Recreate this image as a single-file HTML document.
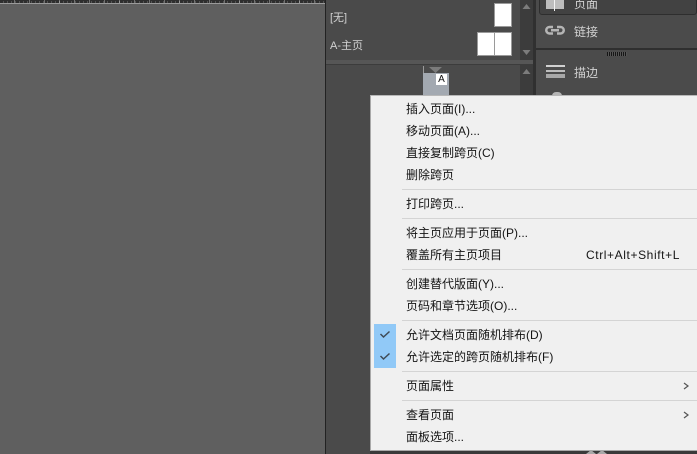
<!DOCTYPE html>
<html lang="zh"><head><meta charset="utf-8"><style>
html,body{margin:0;padding:0;width:697px;height:454px;overflow:hidden;background:#4a4a4a}
*{box-sizing:border-box}
body{position:relative;font-family:"Liberation Sans","Noto Sans CJK SC",sans-serif}
.a{position:absolute}
.t{position:absolute;white-space:nowrap;line-height:16px;height:16px;font-size:12px}
.m{color:#141414;left:406px}
.p{color:#d2d2d2}
.s{position:absolute;left:402px;width:295px;height:1px;background:#d4d4d4}
</style></head><body>
<!-- canvas -->
<div class="a" style="left:0;top:0;width:325px;height:454px;background:#5f5f5f"></div>
<div class="a" style="left:0;top:0;width:325px;height:3px;background:#2e2e2e"></div>
<div class="a" style="left:0;top:1px;width:325px;height:2px;background:repeating-linear-gradient(90deg,#2e2e2e 0 3px,#8c8c8c 3px 4px)"></div>
<div class="a" style="left:0;top:0;width:325px;height:3px;background:repeating-linear-gradient(90deg,#2e2e2e 0 14px,#a0a0a0 14px 15px);opacity:.6"></div>
<div class="a" style="left:0;top:3px;width:325px;height:1px;background:#9a9a9a"></div>
<div class="a" style="left:325px;top:0;width:1px;height:454px;background:#222"></div>
<!-- pages panel -->
<div class="a" style="left:326px;top:0;width:195px;height:454px;background:#4a4a4a"></div>
<div class="t p" style="left:330px;top:10px;font-size:11px">[无]</div>
<div class="t p" style="left:330px;top:38px;font-size:11px">A-主页</div>
<div class="a" style="left:494px;top:3px;width:18px;height:24px;background:#fff;border:1px solid #9a9a9a"></div>
<div class="a" style="left:477px;top:32px;width:18px;height:24px;background:#fff;border:1px solid #9a9a9a"></div>
<div class="a" style="left:494px;top:32px;width:18px;height:24px;background:#fff;border:1px solid #9a9a9a"></div>
<div class="a" style="left:326px;top:60px;width:207px;height:5px;background:#565656;border-bottom:1px solid #3c3c3c"></div>
<div class="a" style="left:520px;top:0;width:13px;height:60px;background:#3c3c3c"></div>
<div class="a" style="left:520px;top:65px;width:13px;height:389px;background:#3c3c3c"></div>
<div class="a" style="left:533px;top:0;width:3px;height:454px;background:#303030"></div>
<svg class="a" style="left:520px;top:0" width="13" height="80"><path d="M2.500 9l4-5 4 5zM2.500 50h8l-4 5zM2.500 74l4-5 4 5z" fill="#7c7c7c"/></svg>
<!-- thumb -->
<div class="a" style="left:423px;top:66px;width:1px;height:8px;background:#9a9a9a"></div>
<svg class="a" style="left:428px;top:66px" width="16" height="7"><path d="M1 1h13l-6.500 6z" fill="#7b7b7b"/></svg>
<div class="a" style="left:423px;top:73px;width:26px;height:24px;background:#a3a9b1"></div>
<div class="a" style="left:436px;top:74px;width:11px;height:11px;background:#fff;color:#111;font-size:10px;line-height:11px;text-align:center;font-weight:400">A</div>
<!-- right panel -->
<div class="a" style="left:536px;top:0;width:161px;height:454px;background:#4b4b4b"></div>
<div class="a" style="left:539px;top:-4px;width:158px;height:19px;background:#424242;border:1px solid #2e2e2e;border-radius:3px"></div>
<svg class="a" style="left:545px;top:0" width="20" height="12"><path d="M1 0h18v9H1z" fill="#bdbdbd"/><path d="M9.500 0v11" stroke="#f2f2f2" stroke-width="1"/></svg>
<div class="t p" style="left:574px;top:-4px">页面</div>
<svg class="a" style="left:545px;top:24px" width="20" height="14" fill="none" stroke="#b5b5b5" stroke-width="2.500"><path d="M8 3H4.500a3 3 0 0 0 0 6.500H8M12 3h3.500a3 3 0 0 1 0 6.500H12M6 6.200h8"/></svg>
<div class="t p" style="left:574px;top:24px">链接</div>
<div class="a" style="left:536px;top:48px;width:161px;height:2px;background:#2f2f2f"></div>
<div class="a" style="left:607px;top:52px;width:20px;height:4px;background:repeating-linear-gradient(90deg,#161616 0 1px,#555 1px 2px)"></div>
<div class="a" style="left:546px;top:65px;width:19px;height:2px;background:#d0d0d0"></div>
<div class="a" style="left:546px;top:70px;width:19px;height:2px;background:#bdbdbd"></div>
<div class="a" style="left:546px;top:74px;width:19px;height:4px;background:#a8a8a8"></div>
<div class="t p" style="left:574px;top:65px">描边</div>
<div class="a" style="left:552px;top:92px;width:10px;height:4px;background:#b5b5b5;border-radius:5px 5px 0 0"></div>
<svg class="a" style="left:585px;top:449px" width="30" height="5"><path d="M2 5l4-4 4 4zM12 5l4-4 4 4z" fill="#a8a8a8"/></svg>
<!-- menu -->
<div class="a" style="left:370px;top:95px;width:327px;height:356px;background:#f0f0f0;border-left:1px solid #a9a9a9;border-top:1px solid #b8b8b8;border-bottom:1px solid #a9a9a9"></div>
<div class="a" style="left:370px;top:451px;width:327px;height:3px;background:#3a3a3a"></div>
<svg class="a" style="left:585px;top:449px" width="30" height="5"><path d="M1 5l5-4 5 4zM12 5l5-4 5 4z" fill="#a8a8a8"/></svg>
<div class="a" style="left:374px;top:324px;width:22px;height:44px;background:#91c9f7"></div>
<svg class="a" style="left:374px;top:324px" width="22" height="44" fill="none" stroke="#3f4a55" stroke-width="1.500"><path d="M6.500 10l3 3 6-5.500M6.500 32l3 3 6-5.500"/></svg>
<div class="t m" style="top:101px">插入页面(I)...</div>
<div class="t m" style="top:123px">移动页面(A)...</div>
<div class="t m" style="top:145px">直接复制跨页(C)</div>
<div class="t m" style="top:167px">删除跨页</div>
<div class="s" style="top:189px"></div>
<div class="t m" style="top:196px">打印跨页...</div>
<div class="s" style="top:218px"></div>
<div class="t m" style="top:225px">将主页应用于页面(P)...</div>
<div class="t m" style="top:247px">覆盖所有主页项目</div>
<div class="t m" style="top:247px;left:586px;letter-spacing:.6px">Ctrl+Alt+Shift+L</div>
<div class="s" style="top:269px"></div>
<div class="t m" style="top:276px">创建替代版面(Y)...</div>
<div class="t m" style="top:298px">页码和章节选项(O)...</div>
<div class="s" style="top:320px"></div>
<div class="t m" style="top:327px">允许文档页面随机排布(D)</div>
<div class="t m" style="top:349px">允许选定的跨页随机排布(F)</div>
<div class="s" style="top:371px"></div>
<div class="t m" style="top:378px">页面属性</div>
<div class="s" style="top:400px"></div>
<div class="t m" style="top:407px">查看页面</div>
<div class="t m" style="top:429px">面板选项...</div>
<svg class="a" style="left:682px;top:380px" width="8" height="40" fill="none" stroke="#555" stroke-width="1.200"><path d="M2 3l4 3-4 3M2 32l4 3-4 3"/></svg>
</body></html>
